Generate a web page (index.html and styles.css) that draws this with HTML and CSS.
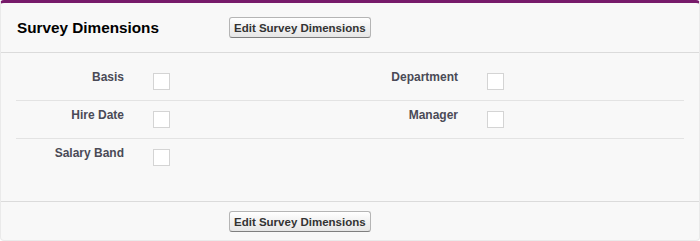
FILE: index.html
```html
<!DOCTYPE html>
<html lang="en">
<head>
    <meta charset="UTF-8">
    <title>Survey Dimensions</title>
    <link rel="stylesheet" href="styles.css">
</head>
<body>

    <div class="page-block">
        <div class="pb-header">
            <h2 class="pb-title">Survey Dimensions</h2>
            <button class="btn">Edit Survey Dimensions</button>
        </div>

        <!-- detail list -->
        <div class="pb-body">
            <div class="detail-row">
                <div class="label-col">Basis</div>
                <div class="data-col"><span class="checkbox"></span></div>
                <div class="label-col">Department</div>
                <div class="data-col"><span class="checkbox"></span></div>
            </div>
            <div class="detail-row">
                <div class="label-col">Hire Date</div>
                <div class="data-col"><span class="checkbox"></span></div>
                <div class="label-col">Manager</div>
                <div class="data-col"><span class="checkbox"></span></div>
            </div>
            <div class="detail-row last">
                <div class="label-col">Salary Band</div>
                <div class="data-col"><span class="checkbox"></span></div>
                <div class="label-col"></div>
                <div class="data-col"></div>
            </div>
        </div>

        <div class="pb-footer">
            <button class="btn">Edit Survey Dimensions</button>
        </div>
    </div>

</body>
</html>
```

FILE: styles.css
```css
body {
    font-family: 'Liberation Sans', Arial, Helvetica, sans-serif;
    margin: 0;
    background-color: #ffffff;
}

.page-block {
    width: 700px;
    box-sizing: border-box;
    background-color: #f8f8f8;
    border: 1px solid #eaeaea;
    border-top: 3px solid #771a6a;
    border-radius: 4px;
}

.pb-header {
    display: flex;
    align-items: center;
    height: 49px;
    padding-left: 16px;
    border-bottom: 1px solid #dbdbdb;
}

.pb-title {
    width: 212px;
    margin: 0;
    font-size: 15.3px;
    font-weight: bold;
    color: #000;
}

.btn {
    height: 21px;
    padding: 0 4px;
    font-family: inherit;
    font-size: 11.5px;
    font-weight: bold;
    color: #333;
    background: linear-gradient(#ffffff, #f4f4f4 40%, #e6e6e6);
    border: 1px solid #b5b5b5;
    border-bottom-color: #7f7f7f;
    border-radius: 3px;
    cursor: pointer;
}

    .btn:hover {
        background: #e8e8e9;
    }

.pb-body {
    padding: 10px 0 25px 15px;
    border-bottom: 1px solid #dbdbdb;
}

.detail-row {
    display: grid;
    grid-template-columns: 120px 214px 120px 214px;
    width: 668px;
    height: 37px;
    border-bottom: 1px solid #e3e3e3;
}

    .detail-row.last {
        border-bottom: none;
    }

.label-col {
    padding: 7px 12px 0 0;
    text-align: right;
    font-size: 12px;
    font-weight: bold;
    color: #4a4a56;
}

.data-col {
    padding: 10px 0 0 17px;
}

.checkbox {
    display: block;
    width: 15px;
    height: 15px;
    background-color: #fff;
    border: 1px solid #d4d4d4;
}

.pb-footer {
    height: 38px;
    padding: 9px 0 0 228px;
    box-sizing: border-box;
}
```
